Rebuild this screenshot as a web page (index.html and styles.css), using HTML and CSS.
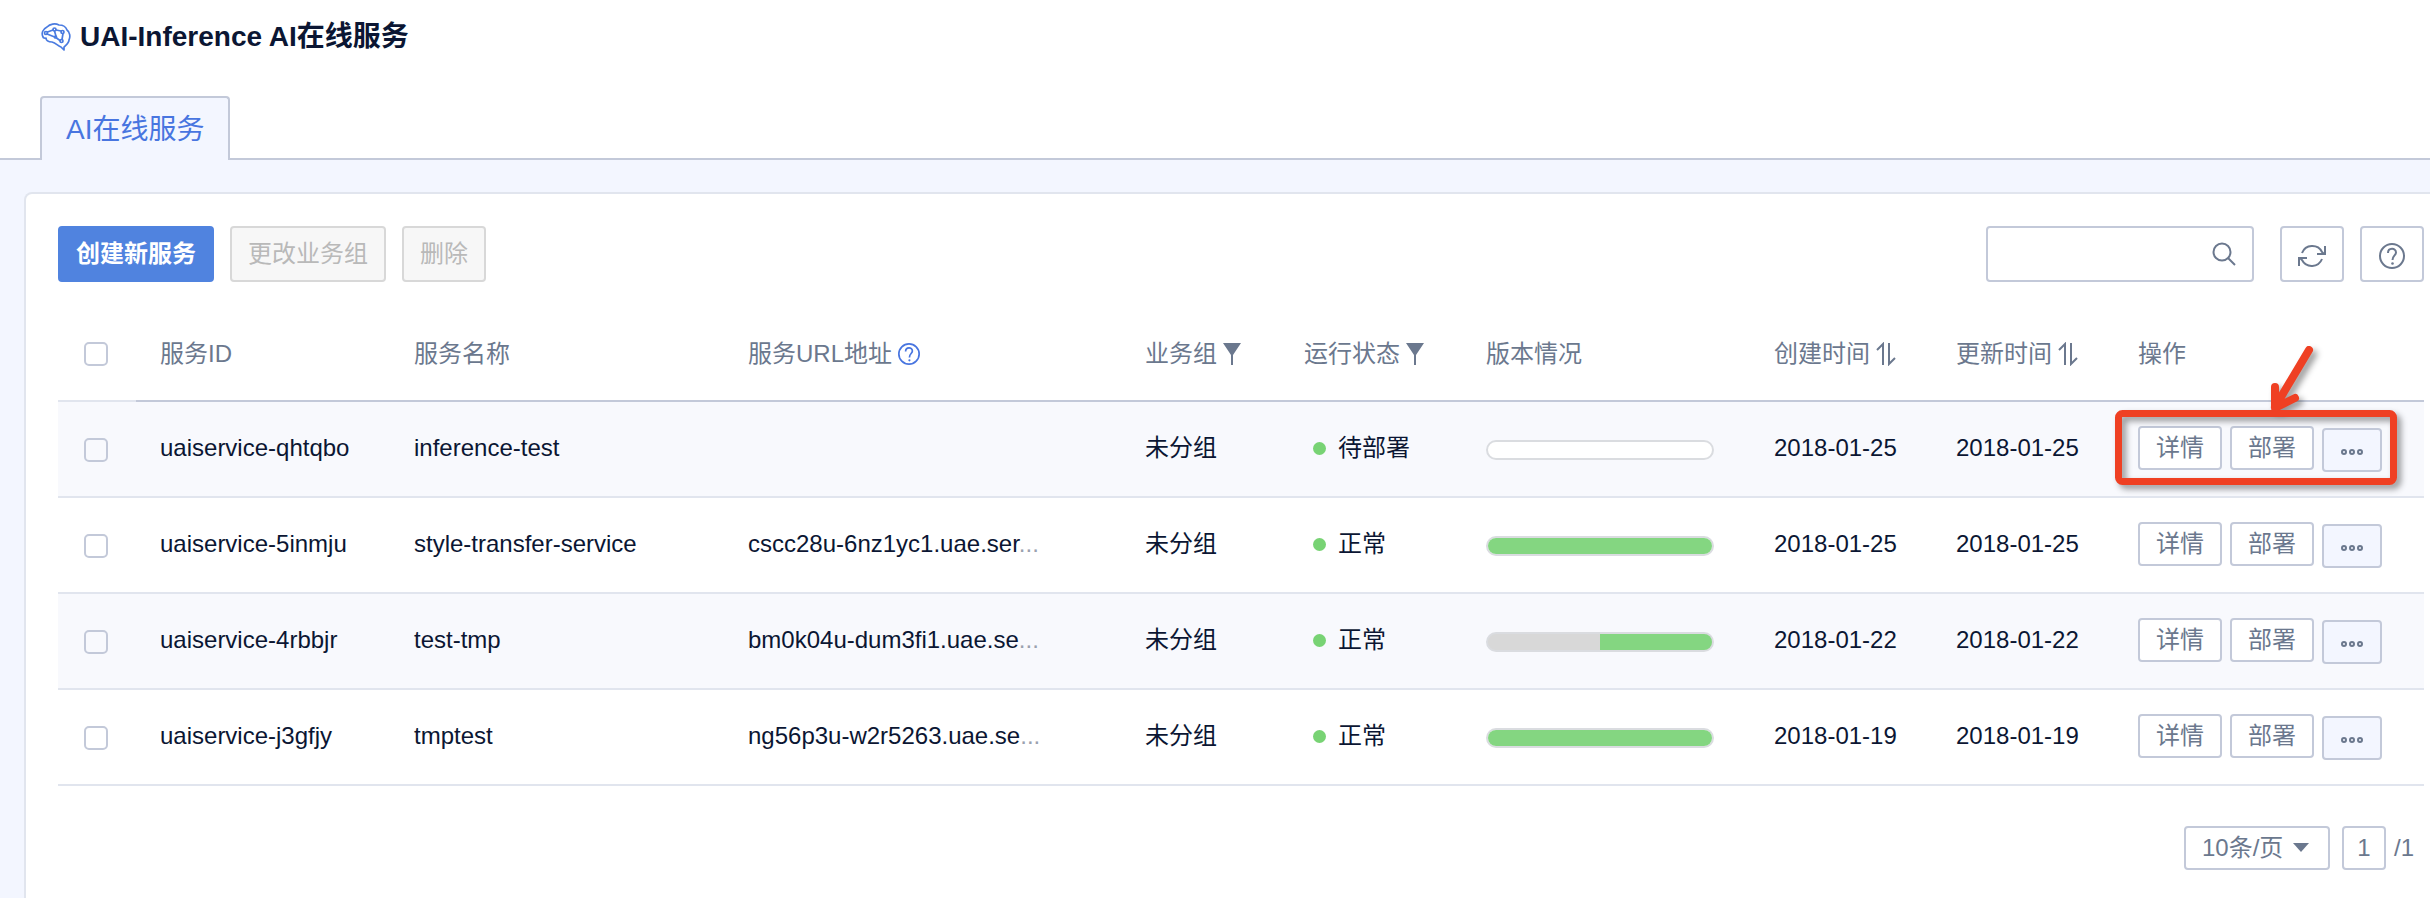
FILE: index.html
```html
<!DOCTYPE html>
<html lang="zh-CN">
<head>
<meta charset="utf-8">
<title>UAI-Inference AI在线服务</title>
<link rel="stylesheet" href="styles.css">
</head>
<body>
<svg class="defs" aria-hidden="true">
  <symbol id="i-filter" viewBox="0 0 18 22"><path d="M0 0H18L10 12V22H8V12Z" fill="currentColor"/></symbol>
  <symbol id="i-sort" viewBox="0 0 20 24"><path d="M1 8L7 2V23M13 1V22L19 16" fill="none" stroke="currentColor" stroke-width="2"/></symbol>
  <symbol id="i-help" viewBox="0 0 26 26"><circle cx="13" cy="13" r="12" fill="none" stroke="currentColor" stroke-width="2"/><path d="M9 10C9 4.500 17 4.500 17 9.500C17 12.500 13.500 12.500 13.500 17" fill="none" stroke="currentColor" stroke-width="2"/><circle cx="13.500" cy="20.500" r="1.300" fill="currentColor"/></symbol>
  <symbol id="i-more" viewBox="0 0 22 6"><g fill="none" stroke="currentColor" stroke-width="2"><circle cx="3" cy="3" r="2"/><circle cx="11" cy="3" r="2"/><circle cx="19" cy="3" r="2"/></g></symbol>
</svg>
<header class="top">
  <h1 class="title">
    <svg class="brain" viewBox="0 0 30 28" aria-hidden="true" fill="none" stroke="currentColor" stroke-width="1.700" stroke-linejoin="round" stroke-linecap="round"><path d="M2 14C0 10 2 6 6 4C9 1 14 0 18 2C22 2 25 4 26 7C29 9 29.500 14 28 17C28 20 25 22 23 24V27L20 24C17 23 15 20 11 19C7 19 5 17 5 15C4 15.500 2.500 15 2 14Z"/><path d="M6.500 9L12 7M15 7L20 8M22 10.500L21 16.500M19 17.500L15.500 15L13.500 8M6 11L15 14.500"/><circle cx="5" cy="10" r="1.500"/><circle cx="13.500" cy="6.500" r="1.500"/><circle cx="21.500" cy="9" r="1.500"/><circle cx="20.500" cy="18" r="1.500"/><circle cx="14.500" cy="14" r="1"/></svg>
    <span>UAI-Inference AI在线服务</span>
  </h1>
  <nav class="tabs"><a class="tab" href="#list">AI在线服务</a></nav>
</header>
<main class="card" id="list">
  <div class="toolbar">
    <button class="btn primary" type="button">创建新服务</button>
    <button class="btn" type="button" disabled>更改业务组</button>
    <button class="btn" type="button" disabled>删除</button>
    <div class="tools">
      <div class="search">
        <input class="search-input" type="text" aria-label="搜索">
        <svg class="search-icon" viewBox="0 0 24 24" aria-hidden="true" fill="none" stroke="currentColor" stroke-width="2"><circle cx="10" cy="10" r="8.500"/><path d="M16 16L23 23"/></svg>
      </div>
      <button class="tool" type="button" aria-label="刷新"><svg class="refresh" viewBox="0 0 28 24" fill="none" stroke="currentColor" stroke-width="2"><path d="M4 9A11 11 0 0 1 24 8L26 10M27 2V10H19M24 15A11 11 0 0 1 4 16L2 14M1 22V14H9"/></svg></button>
      <button class="tool" type="button" aria-label="帮助"><svg class="help"><use href="#i-help"/></svg></button>
    </div>
  </div>
  <table class="table">
    <colgroup><col class="c-check"><col class="c-id"><col class="c-name"><col class="c-url"><col class="c-group"><col class="c-status"><col class="c-version"><col class="c-date"><col class="c-date"><col class="c-ops"></colgroup>
    <thead>
      <tr>
        <th class="check"><input class="box" type="checkbox" aria-label="全选"></th>
        <th>服务ID</th>
        <th>服务名称</th>
        <th><span class="head">服务URL地址<svg class="hint"><use href="#i-help"/></svg></span></th>
        <th><span class="head">业务组<svg class="filter"><use href="#i-filter"/></svg></span></th>
        <th><span class="head">运行状态<svg class="filter"><use href="#i-filter"/></svg></span></th>
        <th>版本情况</th>
        <th><span class="head">创建时间<svg class="sort"><use href="#i-sort"/></svg></span></th>
        <th><span class="head">更新时间<svg class="sort"><use href="#i-sort"/></svg></span></th>
        <th>操作</th>
      </tr>
    </thead>
    <tbody>
      <tr>
        <td class="check"><input class="box" type="checkbox" aria-label="uaiservice-qhtqbo"></td>
        <td>uaiservice-qhtqbo</td>
        <td>inference-test</td>
        <td></td>
        <td>未分组</td>
        <td><span class="status">待部署</span></td>
        <td><div class="bar"></div></td>
        <td>2018-01-25</td>
        <td>2018-01-25</td>
        <td class="marked">
          <div class="ops"><button class="op" type="button">详情</button><button class="op" type="button">部署</button><button class="op more" type="button" aria-label="更多"><svg class="dots" viewBox="0 0 22 6"><use href="#i-more"/></svg></button></div>
          <svg class="mark" viewBox="0 0 300 160" aria-hidden="true" fill="none" stroke="#ef4023" stroke-width="7" stroke-linecap="round" stroke-linejoin="round"><rect x="4.500" y="73.500" width="275" height="68" rx="4"/><path stroke-width="8" d="M195 10L161 67M161 47V68L181 58"/></svg>
        </td>
      </tr>
      <tr>
        <td class="check"><input class="box" type="checkbox" aria-label="uaiservice-5inmju"></td>
        <td>uaiservice-5inmju</td>
        <td>style-transfer-service</td>
        <td>cscc28u-6nz1yc1.uae.ser<span class="cut">...</span></td>
        <td>未分组</td>
        <td><span class="status">正常</span></td>
        <td><div class="bar"><div class="fill" style="width:100%"></div></div></td>
        <td>2018-01-25</td>
        <td>2018-01-25</td>
        <td><div class="ops"><button class="op" type="button">详情</button><button class="op" type="button">部署</button><button class="op more" type="button" aria-label="更多"><svg class="dots" viewBox="0 0 22 6"><use href="#i-more"/></svg></button></div></td>
      </tr>
      <tr>
        <td class="check"><input class="box" type="checkbox" aria-label="uaiservice-4rbbjr"></td>
        <td>uaiservice-4rbbjr</td>
        <td>test-tmp</td>
        <td>bm0k04u-dum3fi1.uae.se<span class="cut">...</span></td>
        <td>未分组</td>
        <td><span class="status">正常</span></td>
        <td><div class="bar partial"><div class="fill" style="width:50%"></div></div></td>
        <td>2018-01-22</td>
        <td>2018-01-22</td>
        <td><div class="ops"><button class="op" type="button">详情</button><button class="op" type="button">部署</button><button class="op more" type="button" aria-label="更多"><svg class="dots" viewBox="0 0 22 6"><use href="#i-more"/></svg></button></div></td>
      </tr>
      <tr>
        <td class="check"><input class="box" type="checkbox" aria-label="uaiservice-j3gfjy"></td>
        <td>uaiservice-j3gfjy</td>
        <td>tmptest</td>
        <td>ng56p3u-w2r5263.uae.se<span class="cut">...</span></td>
        <td>未分组</td>
        <td><span class="status">正常</span></td>
        <td><div class="bar"><div class="fill" style="width:100%"></div></div></td>
        <td>2018-01-19</td>
        <td>2018-01-19</td>
        <td><div class="ops"><button class="op" type="button">详情</button><button class="op" type="button">部署</button><button class="op more" type="button" aria-label="更多"><svg class="dots" viewBox="0 0 22 6"><use href="#i-more"/></svg></button></div></td>
      </tr>
    </tbody>
  </table>
  <div class="pager">
    <div class="size">
      <select class="size-select" aria-label="每页条数"><option>10条/页</option></select>
      <svg class="caret" viewBox="0 0 16 9" aria-hidden="true"><path d="M0 0H16L8 9Z" fill="currentColor"/></svg>
    </div>
    <input class="page" type="text" value="1" aria-label="页码">
    <span class="total">/1</span>
  </div>
</main>
</body>
</html>
```
FILE: styles.css
```css
* { box-sizing: border-box; }
body {
  margin: 0;
  min-height: 100vh;
  display: flex;
  flex-direction: column;
  overflow-x: hidden;
  background: #f3f6ff;
  color: #0b1633;
  font-family: "Liberation Sans", "Noto Sans CJK SC", sans-serif;
  font-size: 24px;
  line-height: 32px;
}
button, input, select { font: inherit; color: inherit; margin: 0; }
svg { display: block; flex: none; }
.defs { position: absolute; width: 0; height: 0; }

.top { background: #fff; }
.title {
  display: flex;
  align-items: center;
  gap: 9px;
  height: 74px;
  margin: 0 0 22px;
  padding-left: 41px;
  font-size: 28px;
  font-weight: 700;
}
.brain { width: 30px; height: 28px; color: #4a7be0; }
.tabs {
  display: flex;
  padding-left: 40px;
  border-bottom: 2px solid #c3c9d9;
}
.tab {
  margin-bottom: -2px;
  padding: 16px 24px 14px;
  border: 2px solid #c3c9d9;
  border-bottom: 0;
  border-radius: 4px 4px 0 0;
  background: #f3f6ff;
  color: #4875e0;
  font-size: 28px;
  text-decoration: none;
}

.card {
  flex: 1;
  margin: 32px -8px 0 24px;
  padding: 32px 12px 26px 32px;
  border: 2px solid #e1e5ee;
  border-bottom: 0;
  border-radius: 8px 0 0 0;
  background: #fff;
}
.toolbar { display: flex; gap: 16px; margin-bottom: 24px; }
.btn {
  height: 56px;
  padding: 0 16px;
  border: 2px solid #d8d8d8;
  border-radius: 4px;
  background: #f7f7f7;
  color: #b9b9b9;
}
.primary { border-color: #5083df; background: #5083df; color: #fff; font-weight: 700; }
.tools { display: flex; gap: 16px; margin-left: auto; color: #6b788e; }
.search { position: relative; margin-right: 10px; }
.search-input {
  width: 268px;
  height: 56px;
  padding: 0 56px 0 16px;
  border: 2px solid #c3c9d9;
  border-radius: 4px;
  background: #fff;
}
.search-icon { position: absolute; top: 16px; right: 18px; width: 24px; height: 24px; }
.tool {
  display: flex;
  align-items: center;
  justify-content: center;
  width: 64px;
  height: 56px;
  padding: 4px 0 0;
  border: 2px solid #c3c9d9;
  border-radius: 4px;
  background: #fff;
}
.refresh { width: 28px; height: 24px; }
.help { width: 26px; height: 26px; }

.table { width: 100%; table-layout: fixed; border-collapse: separate; border-spacing: 0; }
.c-check { width: 78px; }
.c-id { width: 254px; }
.c-name { width: 334px; }
.c-url { width: 397px; }
.c-group { width: 159px; }
.c-status { width: 182px; }
.c-version { width: 288px; }
.c-date { width: 182px; }
.c-ops { width: 310px; }
th, td {
  height: 96px;
  padding: 0 0 2px 24px;
  border-bottom: 2px solid #e1e5ee;
  text-align: left;
  white-space: nowrap;
}
th { padding: 2px 0 0 24px; border-color: #c3c9d9; color: #6b788e; font-weight: 400; }
th.check { border-color: #e1e5ee; }
tbody tr:nth-child(odd) { background: #f8f9fd; }
.check { padding: 2px 0 0 26px; }
.box {
  display: block;
  appearance: none;
  width: 24px;
  height: 24px;
  border: 2px solid #c3c9d9;
  border-radius: 5px;
  background: transparent;
}
.head { display: flex; align-items: center; gap: 6px; }
.hint { width: 22px; height: 22px; color: #4875e0; }
.filter { width: 18px; height: 22px; }
.sort { width: 20px; height: 24px; }
.status { display: flex; align-items: center; gap: 12px; padding-left: 9px; }
.status::before { content: ""; width: 13px; height: 13px; border-radius: 50%; background: #78d374; }
.cut { color: #9aa1af; }
.bar {
  display: flex;
  justify-content: flex-end;
  width: 228px;
  height: 20px;
  margin-top: 4px;
  border: 2px solid #dadce0;
  border-radius: 10px;
  background: #fff;
  overflow: hidden;
}
.partial { background: #d8d8d8; }
.fill { background: #84d681; }
.ops { display: flex; gap: 8px; height: 46px; margin-top: 2px; }
.op {
  height: 44px;
  padding: 0 16px;
  border: 2px solid #c3c9d9;
  border-radius: 4px;
  background: #fff;
  color: #6b788e;
}
.more { align-self: flex-end; width: 60px; padding: 4px 17px 0; background: #f3f6ff; }
.dots { width: 22px; height: 6px; }
.marked { position: relative; }
.mark {
  position: absolute;
  left: 0;
  bottom: -4px;
  width: 300px;
  height: 160px;
  pointer-events: none;
  filter: drop-shadow(4px 4px 3px rgba(0, 0, 0, .4));
}

.pager {
  display: flex;
  justify-content: flex-end;
  align-items: center;
  gap: 8px;
  margin-top: 40px;
  padding-right: 10px;
  color: #6b788e;
}
.size { position: relative; margin-right: 4px; }
.size-select {
  display: block;
  appearance: none;
  width: 146px;
  height: 44px;
  padding: 0 16px;
  border: 2px solid #c3c9d9;
  border-radius: 4px;
  background: #fff;
}
.caret { position: absolute; top: 17px; right: 21px; width: 16px; height: 9px; pointer-events: none; }
.page {
  width: 44px;
  height: 44px;
  padding: 0;
  border: 2px solid #c3c9d9;
  border-radius: 4px;
  background: #fff;
  text-align: center;
}
```
